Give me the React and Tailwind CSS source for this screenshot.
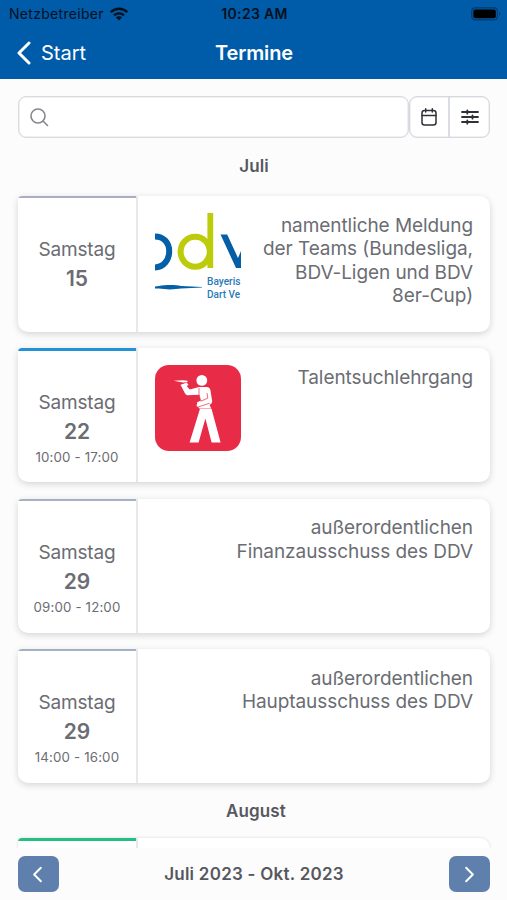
import { ChevronLeft, ChevronRight } from "lucide-react";

const julyEvents = [
  {
    day: "Samstag",
    date: "15",
    lines: ["namentliche Meldung", "der Teams (Bundesliga,", "BDV-Ligen und BDV", "8er-Cup)"],
    logo: "bdv",
    accent: "border-t-2 border-[#a9acc2]",
    height: "h-[136px]",
  },
  {
    day: "Samstag",
    date: "22",
    time: "10:00 - 17:00",
    lines: ["Talentsuchlehrgang"],
    logo: "player",
    accent: "border-t-3 border-[#2492d4]",
    height: "h-[134px]",
  },
  {
    day: "Samstag",
    date: "29",
    time: "09:00 - 12:00",
    lines: ["außerordentlichen", "Finanzausschuss des DDV"],
    accent: "border-t-2 border-[#a3b1c2]",
    height: "h-[134px]",
  },
  {
    day: "Samstag",
    date: "29",
    time: "14:00 - 16:00",
    lines: ["außerordentlichen", "Hauptausschuss des DDV"],
    accent: "border-t-2 border-[#a3b1c2]",
    height: "h-[134px]",
  },
];

function WifiIcon() {
  return (
    <svg width="18" height="14" viewBox="0 0 18 14" fill="none" stroke="#04101c" strokeWidth="2.3">
      <path d="M0.8 5.2C5.4 0.6 12.6 0.6 17.2 5.2" />
      <path d="M4 8.3C6.8 5.6 11.2 5.6 14 8.3" />
      <path d="M9 13.4L5.9 10.3C7.6 8.8 10.4 8.8 12.1 10.3Z" fill="#04101c" stroke="none" />
    </svg>
  );
}

function BatteryIcon() {
  return (
    <svg width="30" height="14" viewBox="0 0 30 14">
      <rect x="0.8" y="0.8" width="25.6" height="12" rx="3.4" fill="none" stroke="#04396b" strokeWidth="1.2" />
      <rect x="2.4" y="2.4" width="22.4" height="8.8" rx="2" fill="#000" />
      <path d="M28 4.8C29.4 5.4 29.4 8.2 28 8.8Z" fill="#04396b" />
    </svg>
  );
}

function BdvLogo() {
  return (
    <svg width="86" height="90" viewBox="0 0 86 90" className="block overflow-visible">
      <path d="M0 23.4C8.6 23.4 14.2 29.6 14.2 38.2S8.6 54.4 0 54.4" fill="none" stroke="#045fa6" strokeWidth="6" />
      <ellipse cx="40.2" cy="38.7" rx="14.6" ry="15" fill="none" stroke="#bccb0a" strokeWidth="6" />
      <path d="M55.3 0V55" stroke="#bccb0a" strokeWidth="5.8" />
      <path d="M65.5 21.5H72.2L83 45L86 38V55H81Z" fill="#045fa6" />
      <path d="M0 73.4L4 73.1C10 71.8 20 71.8 26 72.9L47 74V74.6L26 75.6C20 76.7 10 76.7 4 75.6L0 75.4Z" fill="#045fa6" />
      <g fill="#2b78b7" fontFamily="Roboto, sans-serif" fontSize="11.4" fontWeight="500">
        <text x="52" y="71.8" textLength="33.5" lengthAdjust="spacingAndGlyphs">Bayeris</text>
        <text x="52" y="85.4" textLength="33" lengthAdjust="spacingAndGlyphs">Dart Ve</text>
      </g>
    </svg>
  );
}

function PlayerLogo() {
  return (
    <svg width="86" height="86" viewBox="0 0 86 86" className="block">
      <rect width="86" height="86" rx="14" fill="#e82c48" />
      <g fill="#fff">
        <circle cx="46.8" cy="15.4" r="5.4" />
        <path d="M18.5 15.8L28 15.3L32.5 15.8V17.2L28 17.6Z" />
        <path d="M25.5 19.8L31.5 17.8L33.5 19.4L31.8 21.2L34.8 24.6L44 22.1H52.2C54.4 22.5 55.3 24 55.6 26L57.2 36.4C57.1 38 56 39.2 54.6 39.8L56.2 43.5H44.3L43.2 42L41.6 41.3L42.2 37.2L45.4 35.8L44.3 29.8L32.2 30.2C30.8 29.8 30 28.6 29.4 27.2Z" />
        <path d="M45 43.8H56.5L65.6 77.5H56.6L50.4 53.4L43.6 77.5H34.6Z" />
      </g>
      <path d="M44 23V29.4L45.8 36.2L52.8 33.2L52 28M43 42L54.6 38.3" fill="none" stroke="#e82c48" strokeWidth="0.7" />
    </svg>
  );
}

function EventCard({ event }) {
  return (
    <article className={`flex overflow-hidden rounded-[10px] rounded-tl-[4px] bg-white shadow-[0_2px_7px_rgba(0,0,0,0.16)] ${event.height}`}>
      <div className={`w-[118px] shrink-0 text-center ${event.accent}`}>
        <p className="pt-[37px] text-[19px] leading-[29px] tracking-[-0.2px]">{event.day}</p>
        <p className="text-[21px] leading-[29px] font-semibold">{event.date}</p>
        {event.time && <p className="text-[13.3px] leading-[22px] tracking-[0.15px]">{event.time}</p>}
      </div>
      <div className="flex flex-1 border-l-2 border-[#e7e8ea] pt-[17px] pr-[17px] pl-[17px]">
        {event.logo === "bdv" && <BdvLogo />}
        {event.logo === "player" && <PlayerLogo />}
        <p className="ml-auto pt-[0.7px] text-right text-[19px] leading-[23.4px] tracking-[-0.07px] whitespace-nowrap">
          {event.lines.map((line) => (
            <span key={line} className="block">{line}</span>
          ))}
        </p>
      </div>
    </article>
  );
}

export default function App() {
  return (
    <div className="flex h-[900px] w-[507px] flex-col overflow-hidden bg-[#fcfcfd] font-['Inter',sans-serif] text-[#6b6d73]">
      <header className="h-[79px] shrink-0 bg-[#005ca9]">
        <div className="grid h-[27px] grid-cols-3 items-center pr-[6px] pl-[9px] text-[#04101c]">
          <div className="flex items-center gap-[6px]">
            <span className="text-[14px] tracking-[0.3px]">Netzbetreiber</span>
            <WifiIcon />
          </div>
          <span className="pr-[1px] text-center text-[14px] font-semibold tracking-[0.3px]">10:23 AM</span>
          <div className="flex justify-end"><BatteryIcon /></div>
        </div>
        <div className="grid h-[51px] grid-cols-3 items-center px-[17px] text-white">
          <div className="flex items-center gap-[10px]">
            <svg width="14" height="24" viewBox="0 0 14 24" fill="none" stroke="currentColor" strokeWidth="3" strokeLinecap="round" strokeLinejoin="round">
              <path d="M12 2L2 12L12 22" />
            </svg>
            <span className="text-[20px]">Start</span>
          </div>
          <h1 className="pl-[1px] text-center text-[20px] font-semibold tracking-[-0.1px]">Termine</h1>
        </div>
      </header>

      <main className="min-h-0 flex-1 overflow-hidden pt-[17px] pr-[17px] pl-[18px]">
        <div className="flex h-[42px]">
          <div className="flex w-[391px] items-center rounded-lg border-[1.5px] border-[#dadbdf] bg-white pl-[11px] shadow-[inset_0_0_0_0.5px_#e2e3e6]">
            <svg width="19" height="19" viewBox="0 0 19 19" fill="none" stroke="#85878b" strokeWidth="1.6" strokeLinecap="round">
              <circle cx="8" cy="8" r="7" />
              <path d="M13 13L17.5 17.5" />
            </svg>
          </div>
          <div className="flex flex-1 rounded-lg border-[1.5px] border-[#d6d8df] bg-white text-[#303136] shadow-[inset_0_0_0_0.5px_#e2e3e6]">
            <button className="flex w-[40px] items-center justify-center border-r-2 border-[#dadce4]">
              <svg width="16" height="18" viewBox="0 0 16 18" fill="none" stroke="currentColor" strokeWidth="1.5" strokeLinecap="round">
                <rect x="1" y="2.5" width="14" height="14.5" rx="2.5" />
                <path d="M1 7.5H15M4.7 0.8V4M11.3 0.8V4" />
              </svg>
            </button>
            <button className="flex flex-1 items-center justify-center">
              <svg width="18" height="16" viewBox="0 0 18 16" fill="none" stroke="currentColor" strokeWidth="1.8" strokeLinecap="round">
                <path d="M1 3H17M1 8H17M1 13H17" />
                <path d="M6.3 1.3V4.7M11.5 6.3V9.7M6.3 11.3V14.7" />
              </svg>
            </button>
          </div>
        </div>

        <h2 className="pt-[15px] pb-[17px] text-center text-[17px] leading-[26px] font-semibold tracking-[0.1px] text-[#56585e]">Juli</h2>
        <div className="flex flex-col gap-[16.3px]">
          {julyEvents.map((event, index) => (
            <EventCard key={index} event={event} />
          ))}
        </div>

        <h2 className="pt-[15px] pb-[14px] pl-[4px] text-center text-[17px] leading-[26px] font-semibold tracking-[0.1px] text-[#56585e]">August</h2>
        <div className="flex h-[134px] overflow-hidden rounded-[10px] rounded-tl-[4px] bg-white shadow-[0_0_3px_rgba(0,0,0,0.15)]">
          <div className="w-[118px] border-t-3 border-[#23bf83]" />
          <div className="flex-1 border-l-2 border-[#e7e8ea]" />
        </div>
      </main>

      <footer className="flex h-[52px] shrink-0 items-center justify-between pr-[17px] pl-[18px]">
        <button className="flex h-9 w-[41px] items-center justify-center rounded-[7px] bg-[#5f80ad] pr-[2px] text-white">
          <ChevronLeft size={27} strokeWidth={1.7} />
        </button>
        <span className="pt-[1px] text-[17px] font-semibold tracking-[0.25px] text-[#56585e]">Juli 2023 - Okt. 2023</span>
        <button className="flex h-9 w-[41px] items-center justify-center rounded-[7px] bg-[#5f80ad] text-white">
          <ChevronRight size={27} strokeWidth={1.7} />
        </button>
      </footer>
    </div>
  );
}
